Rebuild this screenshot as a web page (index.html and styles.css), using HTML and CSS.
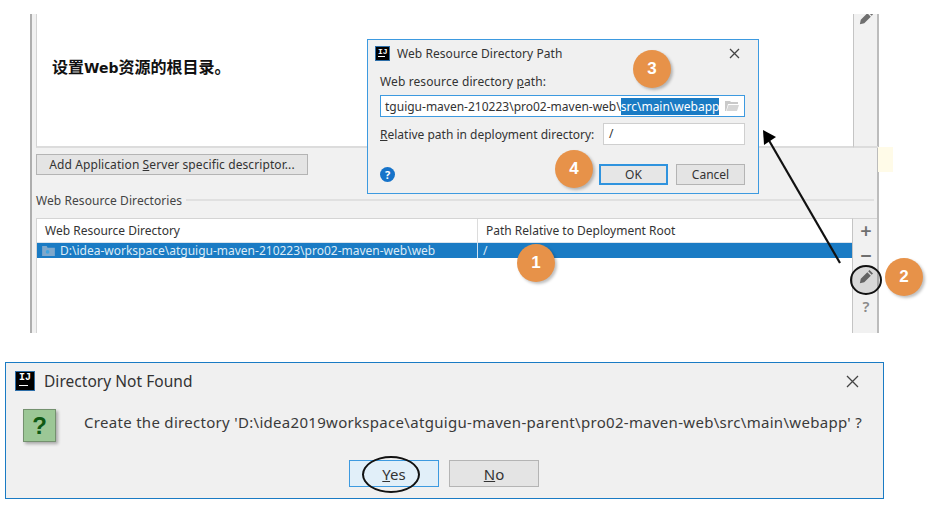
FILE: index.html
```html
<!DOCTYPE html>
<html lang="en">
<head>
    <meta charset="UTF-8">
    <title>Web Resource Directory Path</title>
    <link rel="stylesheet" href="styles.css">
</head>
<body>
    <div class="page">
        <div class="window">
            <div class="top-row">
                <div class="note-panel">
                    <p class="note">设置<span class="note-latin">Web</span>资源的根目录。</p>
                </div>
                <div class="toolbar toolbar-top">
                    <svg class="pencil" viewBox="0 0 16 16"><path d="M1 15l1-5 7.500-7.500 4 4L6 14zM10.500 1.500L12 0l4 4-1.500 1.500z"/></svg>
                </div>
            </div>
            <div class="middle">
                <button class="btn descriptor-btn">Add Application <u>S</u>erver specific descriptor...</button>
                <div class="group-title"><span>Web Resource Directories</span><i class="group-line"></i></div>
            </div>
            <div class="table-row">
                <div class="table">
                    <div class="table-head">
                        <div class="col-one">Web Resource Directory</div>
                        <div class="col-two">Path Relative to Deployment Root</div>
                    </div>
                    <div class="table-selected">
                        <div class="col-one">
                            <svg class="folder-row" viewBox="0 0 14 11"><path fill="#7fa8cb" d="M0 0h5l1 2h8v9H0z"/><circle cx="6" cy="6.500" r="2" fill="#3fa4e0"/></svg>
                            D:\idea-workspace\atguigu-maven-210223\pro02-maven-web\web
                        </div>
                        <div class="col-two">/</div>
                    </div>
                </div>
                <div class="toolbar toolbar-bottom">
                    <span class="tool-glyph">+</span>
                    <span class="tool-glyph">−</span>
                    <svg class="pencil" viewBox="0 0 16 16"><path d="M1 15l1-5 7.500-7.500 4 4L6 14zM10.500 1.500L12 0l4 4-1.500 1.500z"/></svg>
                    <span class="tool-glyph tool-help">?</span>
                </div>
            </div>
        </div>

        <div class="confirm">
            <div class="confirm-title">
                <span class="ij-logo ij-logo-large"><b>IJ</b></span>
                <span class="confirm-caption">Directory Not Found</span>
                <svg class="close close-large" viewBox="0 0 13 13"><path d="M1 1l11 11M12 1L1 12"/></svg>
            </div>
            <div class="confirm-body">
                <div class="question-icon">?</div>
                <p class="confirm-text">Create the directory 'D:\idea2019workspace\atguigu-maven-parent\pro02-maven-web\src\main\webapp' ?</p>
            </div>
            <div class="confirm-buttons">
                <button class="btn btn-large btn-yes"><u>Y</u>es</button>
                <button class="btn btn-large"><u>N</u>o</button>
            </div>
        </div>
    </div>

    <div class="hint-block"></div>

    <div class="path-dialog">
        <div class="dialog-title">
            <span class="ij-logo"><b>IJ</b></span>
            <span class="dialog-caption">Web Resource Directory Path</span>
            <svg class="close" viewBox="0 0 11 11"><path d="M1 1l9 9M10 1l-9 9"/></svg>
        </div>
        <div class="dialog-label">Web resource directory <u>p</u>ath:</div>
        <div class="path-input">
            <span class="path-text">tguigu-maven-210223\pro02-maven-web\<span class="path-selected">src\main\webapp</span></span>
            <svg class="folder-input" viewBox="0 0 14 10"><path fill="#c9c9c9" d="M0 0h5l1 1h7v2H3L1 10H0z"/><path fill="#d6d6d6" d="M3.500 4H14l-2 6H1.500z"/></svg>
        </div>
        <div class="relative-row">
            <span class="relative-label"><u>R</u>elative path in deployment directory:</span>
            <div class="relative-input">/</div>
        </div>
        <div class="dialog-footer">
            <span class="help-dot">?</span>
            <button class="btn btn-small btn-ok">OK</button>
            <button class="btn btn-small">Cancel</button>
        </div>
    </div>

    <svg class="arrow" viewBox="0 0 90 145">
        <path d="M86 142L13 16" stroke="#111" stroke-width="2.200" fill="none"/>
        <path d="M9 9l13 7-12 8z" fill="#000"/>
    </svg>

    <div class="ring ring-pencil"></div>
    <div class="ring ring-yes"></div>

    <div class="badge badge-one">1</div>
    <div class="badge badge-two">2</div>
    <div class="badge badge-three">3</div>
    <div class="badge badge-four">4</div>
</body>
</html>
```

FILE: styles.css
```css
* {
    margin: 0;
    padding: 0;
    box-sizing: border-box;
}

body {
    position: relative;
    width: 931px;
    height: 507px;
    overflow: hidden;
    background: #fff;
    font-family: "Noto Sans", "Noto Sans CJK SC", sans-serif;
    font-size: 12px;
    color: #333;
}

.page {
    padding: 14px 0 0 5px;
}

/* background IDE window */
.window {
    width: 849px;
    height: 319px;
    margin-left: 25px;
    background: #f1f1f1;
    border-left: 2px solid #aeaeae;
    border-right: 2px solid #bcbcbc;
    display: flex;
    flex-direction: column;
}

.top-row {
    display: flex;
    height: 134px;
    padding-left: 4px;
}

.note-panel {
    flex: 1;
    background: #fff;
    border-left: 1px solid #d4d4d4;
    border-bottom: 2px solid #dcdcdc;
    padding: 41px 0 0 15px;
}

.note {
    font-size: 16px;
    font-weight: 700;
    line-height: 24px;
    color: #111;
}

.note-latin {
    font-family: "DejaVu Sans", sans-serif;
    font-size: 14px;
}

.toolbar {
    width: 25px;
    border-left: 1px solid #c4c4c4;
    overflow: hidden;
}

.toolbar-top {
    padding: 0 0 0 5px;
    border-bottom: 2px solid #dcdcdc;
    margin-right: -1px;
}

.toolbar-top .pencil {
    margin-top: -3px;
}

.pencil {
    display: block;
    width: 14px;
    height: 14px;
    fill: #6f6f6f;
}

.middle {
    height: 70px;
    padding: 6px 0 0 4px;
}

.btn {
    display: block;
    font-family: inherit;
    font-size: 12px;
    color: #333;
    background: #e4e4e4;
    border: 1px solid #b4b4b4;
}

.descriptor-btn {
    width: 272px;
    height: 21px;
    letter-spacing: 0.090px;
}

.group-title {
    display: flex;
    align-items: center;
    gap: 4px;
    height: 18px;
    margin: 16px 3px 0 0;
    letter-spacing: 0.070px;
    color: #444;
}

.group-line {
    flex: 1;
    height: 2px;
    background: #e0e0e0;
}

.table-row {
    flex: 1;
    display: flex;
    padding-left: 4px;
    min-height: 0;
}

.table {
    flex: 1;
    background: #fff;
    border-top: 1px solid #d4d4d4;
    border-left: 1px solid #d4d4d4;
}

.table-head {
    display: flex;
    height: 24px;
    line-height: 23px;
    border-bottom: 1px solid #dbe4ec;
}

.col-one {
    width: 441px;
    padding-left: 8px;
    border-right: 1px solid #dcdcdc;
}

.col-two {
    flex: 1;
    padding-left: 8px;
}

.table-selected {
    display: flex;
    height: 15px;
    line-height: 15px;
    background: #1a7bc4;
    color: #dcebf6;
}

.table-selected .col-one {
    display: flex;
    align-items: center;
    gap: 5px;
    padding-left: 5px;
    border-right: 1px solid #cfe2f0;
}

.table-selected .col-two {
    padding-left: 5px;
}

.folder-row {
    width: 13px;
    height: 10px;
}

.toolbar-bottom {
    display: flex;
    flex-direction: column;
    align-items: center;
    padding: 1px 0 0 2px;
    border-top: 1px solid #d4d4d4;
}

.tool-glyph {
    height: 25px;
    font-size: 20px;
    line-height: 22px;
    font-weight: 600;
    color: #6f6f6f;
}

.toolbar-bottom .pencil {
    margin: 0 0 11px;
}

.tool-help {
    font-size: 15px;
    color: #8a8a8a;
}

/* bottom confirm dialog */
.confirm {
    width: 879px;
    height: 137px;
    margin-top: 29px;
    background: #f0f0f0;
    border: 1px solid #1a7bc4;
}

.confirm-title {
    display: flex;
    align-items: center;
    height: 36px;
    padding: 0 24px 0 9px;
}

.confirm-caption {
    flex: 1;
    margin-left: 9px;
    font-size: 15.500px;
    letter-spacing: 0.040px;
}

.ij-logo {
    width: 15px;
    height: 15px;
    background: #000;
    border: 1px solid #2d6ea8;
    color: #fff;
    display: block;
    font-family: "Liberation Mono", monospace;
    font-size: 8px;
    line-height: 9px;
    text-align: left;
    padding-left: 2px;
}

.ij-logo b {
    display: block;
    width: 7px;
    border-bottom: 1px solid #fff;
    height: 10px;
}

.ij-logo-large {
    width: 20px;
    height: 20px;
    font-size: 10px;
    line-height: 12px;
    padding-left: 3px;
}

.ij-logo-large b {
    width: 9px;
    height: 14px;
}

.close {
    width: 11px;
    height: 11px;
    stroke: #444;
    stroke-width: 1.300;
    fill: none;
}

.close-large {
    width: 13px;
    height: 13px;
}

.confirm-body {
    display: flex;
    align-items: center;
    height: 34px;
    margin-top: 9px;
    padding-left: 17px;
}

.question-icon {
    width: 33px;
    height: 33px;
    background: #9cc796;
    border: 1px solid #74916f;
    box-shadow: 2px 2px 3px rgba(0, 0, 0, 0.3);
    text-align: center;
    font-family: "Liberation Sans", sans-serif;
    font-size: 24px;
    line-height: 31px;
    font-weight: 700;
    color: #0f5a14;
}

.confirm-text {
    margin: -6px 0 0 28px;
    font-size: 15px;
    letter-spacing: 0.300px;
    white-space: nowrap;
    color: #3a3a3a;
}

.confirm-buttons {
    display: flex;
    justify-content: center;
    gap: 10px;
    margin-top: 18px;
    padding-right: 1px;
}

.btn-large {
    width: 90px;
    height: 27px;
    font-size: 15px;
}

.btn-yes {
    background: #e1eff9;
    border-color: #3d9ae0;
}

/* overlays */
.hint-block {
    position: absolute;
    left: 878px;
    top: 147px;
    width: 15px;
    height: 25px;
    background: #fffbe8;
}

.path-dialog {
    position: absolute;
    left: 367px;
    top: 39px;
    width: 392px;
    height: 155px;
    padding: 0 13px 0 12px;
    background: #f0f0f0;
    border: 1px solid #3d9ae0;
}

.dialog-title {
    display: flex;
    align-items: center;
    height: 27px;
    margin: 0 5px 0 -5px;
}

.dialog-caption {
    flex: 1;
    margin-left: 7px;
    letter-spacing: 0.060px;
}

.dialog-label {
    height: 20px;
    margin-top: 6px;
    line-height: 18px;
    letter-spacing: 0.110px;
}

.path-input {
    display: flex;
    align-items: center;
    justify-content: space-between;
    height: 22px;
    margin: 2px 0 0 0;
    padding: 0 5px 0 4px;
    background: #fff;
    border: 1px solid #3d9ae0;
    white-space: nowrap;
}

.path-selected {
    background: #1a7bc4;
    color: #fff;
}

.folder-input {
    width: 14px;
    height: 10px;
}

.relative-row {
    display: flex;
    align-items: center;
    justify-content: space-between;
    margin-top: 6px;
}

.relative-label {
    white-space: nowrap;
}

.relative-input {
    width: 142px;
    height: 22px;
    padding-left: 5px;
    line-height: 20px;
    background: #fff;
    border: 1px solid #cfcfcf;
}

.dialog-footer {
    display: flex;
    align-items: center;
    justify-content: flex-end;
    gap: 8px;
    margin-top: 19px;
}

.help-dot {
    width: 15px;
    height: 15px;
    margin-right: auto;
    border-radius: 50%;
    background: #1673c9;
    color: #fff;
    font-size: 11px;
    font-weight: 700;
    line-height: 15px;
    text-align: center;
}

.btn-small {
    width: 69px;
    height: 21px;
    line-height: 17px;
}

.btn-ok {
    border: 2px solid #2f93de;
    background: #e6e6e6;
}

.arrow {
    position: absolute;
    left: 754px;
    top: 121px;
    width: 90px;
    height: 145px;
}

.ring {
    position: absolute;
    border: 2px solid #111;
    border-radius: 50%;
}

.ring-pencil {
    left: 850px;
    top: 265px;
    width: 32px;
    height: 30px;
    background: rgba(0, 0, 0, 0.1);
}

.ring-yes {
    left: 362px;
    top: 456px;
    width: 58px;
    height: 37px;
}

.badge {
    position: absolute;
    width: 38px;
    height: 38px;
    border-radius: 50%;
    background: #e79249;
    box-shadow: 2px 2px 3px rgba(0, 0, 0, 0.25);
    color: #fff;
    font-family: "Liberation Sans", sans-serif;
    font-size: 17px;
    font-weight: 700;
    line-height: 38px;
    text-align: center;
}

.badge-one {
    left: 517px;
    top: 244px;
}

.badge-two {
    left: 885px;
    top: 258px;
}

.badge-three {
    left: 633px;
    top: 50px;
}

.badge-four {
    left: 555px;
    top: 150px;
}
```
